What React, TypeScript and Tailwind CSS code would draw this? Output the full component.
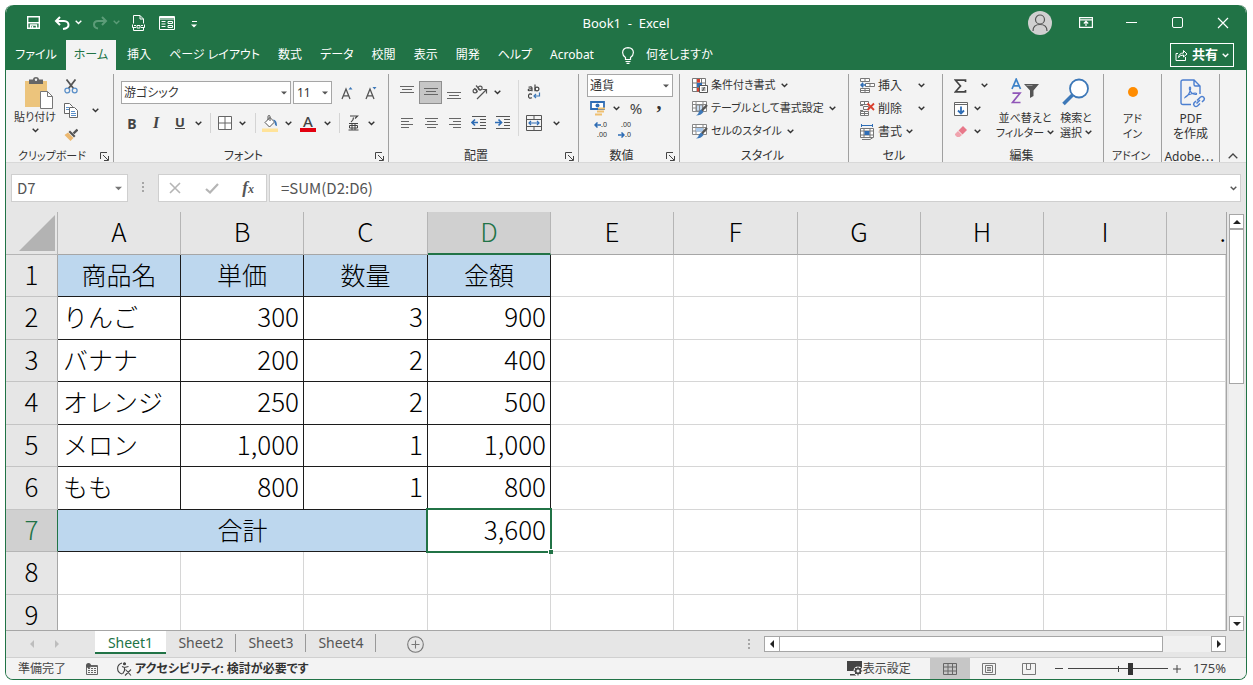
import React, { useState } from 'react';

type Kids = { children?: React.ReactNode };

const Chev = ({ className = 'w-4', label }: { className?: string; label: string }) => (
  <button aria-label={label} className={`flex h-5 shrink-0 items-center justify-center ${className}`}>
    <ChevIcon />
  </button>
);

const ChevIcon = () => (
  <svg width="7" height="5" viewBox="0 0 7 5" fill="none" stroke="currentColor" strokeWidth="1.4" className="shrink-0">
    <path d="M0.7 0.8 3.5 3.6 6.3 0.8" />
  </svg>
);

const Tri = ({ dir = 'down', className = '' }: { dir?: 'down' | 'up' | 'left' | 'right'; className?: string }) => {
  const d = {
    down: 'M0 2h8L4 6z',
    up: 'M0 6h8L4 2z',
    left: 'M6 0v8L2 4z',
    right: 'M2 0v8l4-4z',
  }[dir];
  return (
    <svg width="8" height="8" viewBox="0 0 8 8" fill="currentColor" className={className}>
      <path d={d} />
    </svg>
  );
};

const Tool = ({ label, className = 'w-6', children }: Kids & { label: string; className?: string }) => (
  <button aria-label={label} className={`flex h-6 shrink-0 items-center justify-center ${className}`}>
    {children}
  </button>
);

const Launcher = () => (
  <button aria-label="詳細設定" className="flex h-3 w-3 shrink-0 items-center justify-center">
    <svg width="9" height="9" viewBox="0 0 9 9" fill="none" stroke="#444" strokeWidth="1">
      <path d="M0.5 7V0.5H7M3 3l5 5M8.5 4v4.5H4" />
    </svg>
  </button>
);

const Group = ({
  name,
  className,
  launcher = false,
  nameSize = 'text-[12px]',
  children,
}: Kids & { name: React.ReactNode; className: string; launcher?: boolean; nameSize?: string }) => (
  <section className={`flex shrink-0 flex-col border-r border-[#a0a0a0] ${className}`}>
    <div className="flex h-[76px] px-[5px]">{children}</div>
    <div className="flex h-3 items-center pr-[3px]">
      <h2 className={`flex-1 whitespace-nowrap text-center leading-3 ${nameSize}`}>{name}</h2>
      {launcher && <Launcher />}
    </div>
  </section>
);

const Sep = ({ className = 'w-[11px]' }: { className?: string }) => (
  <span className={`flex h-5 shrink-0 justify-center ${className}`}>
    <span className="w-px bg-[#d4d4d4]" />
  </span>
);

const Lines = ({ rows }: { rows: [number, number, number][] }) => (
  <svg width="16" height="16" viewBox="0 0 16 16" stroke="#666" strokeWidth="1">
    {rows.map(([x1, x2, y]) => (
      <path key={y} d={`M${x1} ${y}.5H${x2}`} />
    ))}
  </svg>
);

const SaveIcon = () => (
  <svg width="13" height="13" viewBox="0 0 13 13" fill="none" stroke="#fff" strokeWidth="1.4">
    <path d="M0.7 0.7h11.6v11.6H0.7z" />
    <path d="M1 6.8h11" />
    <path d="M3.5 12V9h6V12" />
    <path d="M5.500 10v2" />
  </svg>
);

const UndoIcon = ({ flip = false }: { flip?: boolean }) => (
  <svg width="16" height="14" viewBox="0 0 16 14" fill="none" stroke={flip ? '#5c9c78' : '#fff'} strokeWidth="2">
    <path d={flip ? 'M14 5H6C3 5 2 7 2 8.5S3 12 6 12.5M10 1l4 4-4 4' : 'M2 5h8c3 0 4.5 2 4.5 4S13 12.5 9 13M6 1 2 5l4 4'} />
  </svg>
);

const DocIcon = () => (
  <svg width="13" height="16" viewBox="0 0 13 16" fill="none" stroke="#fff" strokeWidth="1">
    <path d="M1.500 8.500V0.500h6.500L11.500 4v4.500M8 0.500V4h3.500" />
    <path d="M0.500 9.500v3M12.500 9.500v3M2 10.500h2M9 10.500h2M0.500 12.500h3.500M9 12.500h3.500M5 10.500h3v2.500H5zM1.500 13v2.500h10V13" />
  </svg>
);

const FormIcon = () => (
  <svg width="16" height="14" viewBox="0 0 16 14" fill="none" stroke="#fff" strokeWidth="1">
    <path d="M0.500 0.500h15v13H0.500zM0.500 3h15M2.500 5.500h4M2.500 8h4M2.500 10.500h4M9 5.500h4.500v2H9zM9 9.500h4.500v2H9z" />
    <path d="M1 1.500h14" />
  </svg>
);

const PasteIcon = () => (
  <svg width="28" height="32" viewBox="0 0 28 32">
    <path d="M0 4h22v26H0z" fill="#ecc47c" />
    <path d="M4 2.500h4C8 .8 9.500 0 11 0s3 .8 3 2.500h4V7H4z" fill="#666" />
    <circle cx="11" cy="2.800" r="1.200" fill="#f2f2f2" />
    <path d="M15.500 14.500h7l5 5v12h-12z" fill="#fff" stroke="#777" />
    <path d="M22.500 14.500v5h5" fill="none" stroke="#777" />
  </svg>
);

const CutIcon = () => (
  <svg width="14" height="15" viewBox="0 0 14 15" fill="none">
    <path d="M2.500 0.500 9.500 9.500M11.500 0.500 4.500 9.500" stroke="#555" strokeWidth="1.800" />
    <circle cx="3.300" cy="11.500" r="2.400" stroke="#5a8fc8" strokeWidth="1.300" />
    <circle cx="10.700" cy="11.500" r="2.400" stroke="#5a8fc8" strokeWidth="1.300" />
  </svg>
);

const CopyIcon = () => (
  <svg width="14" height="15" viewBox="0 0 14 15" fill="#fff" stroke="#666">
    <path d="M0.500 0.500h5l3 3v7h-8z" />
    <path d="M5.500 4.500h5l3 3v7h-8z" />
    <path d="M2 4.500h3M2 6.500h3M7 8.500h4M7 10.500h5M7 12.500h5" stroke="#5a8fc8" />
  </svg>
);

const BrushIcon = () => (
  <svg width="14" height="13" viewBox="0 0 14 13">
    <path d="M13.500 1.500 9.500 5.500" stroke="#555" strokeWidth="2.400" />
    <path d="M6 2.500 11.500 8 10 9.500 4.500 4z" fill="#555" />
    <path d="M4 4.500 9.500 10 6.500 13 0.500 7z" fill="#ecb870" />
  </svg>
);

const BordersIcon = () => (
  <svg width="14" height="14" viewBox="0 0 14 14" fill="#fff" stroke="#666">
    <path d="M0.500 0.500h13v13h-13zM7 0.500v13M0.500 7h13" />
  </svg>
);

const FillIcon = () => (
  <svg width="16" height="17" viewBox="0 0 16 17">
    <path d="M0 13.500h16V17H0z" fill="#ffe39a" />
    <path d="M3 7.500 8 2.500l4.500 4.500L7.500 12z" fill="#fff" stroke="#555" />
    <path d="M6 5V1.500Q6 .5 7 .5t1 1V6" fill="none" stroke="#555" />
    <path d="M11 4.500q4 0 4 6.500-2.500 0-2.300-4z" fill="#3d78b8" />
  </svg>
);

const FontColorIcon = () => (
  <span className="flex w-4 flex-col items-center">
    <span className="text-[15px] font-medium leading-[13px] text-[#444]">A</span>
    <span className="h-1 w-4 bg-[#e3000f]" />
  </span>
);

const FontSizeIcon = ({ up = false }: { up?: boolean }) => (
  <svg width="13" height="14" viewBox="0 0 13 14" fill="none">
    <path d="M1 13 5 3l4 10M2.400 9.800h5.200" stroke="#555" strokeWidth="1.300" />
    <path d={up ? 'M7.500 3.500 9.500 1l2 2.500z' : 'M7.500 1 9.500 3.500l2-2.500z'} fill="#3d78b8" />
  </svg>
);

const OrientIcon = () => (
  <svg width="17" height="16" viewBox="0 0 17 16" fill="none" stroke="#555" strokeWidth="1.200">
    <circle cx="4" cy="7" r="1.900" />
    <path d="M3.500 4.200 6.500 8.200" />
    <path d="M5 1.500 9.500 6.500" />
    <circle cx="9.200" cy="4" r="1.900" />
    <path d="M6 15 15 6M11.500 5.500H15.500V9.500" />
  </svg>
);

const WrapIcon = () => (
  <svg width="14" height="16" viewBox="0 0 14 16" fill="none" stroke="#444" strokeWidth="1.200">
    <path d="M1.500 3.300Q5 2 5 4.200v3M5 4.800Q1.200 4.500 1.200 6t3.800 0M8 0.500v6.700" />
    <circle cx="10" cy="5" r="1.900" />
    <path d="M5 10.400Q1.500 9 1.500 12t3.500 1.800" />
    <path d="M12.500 8.500v3.500H7M9 10 7 12l2 2" stroke="#3d78b8" />
  </svg>
);

const IndentIcon = ({ inc = false }: { inc?: boolean }) => (
  <svg width="16" height="14" viewBox="0 0 16 14" fill="none">
    <path d="M1 0.500h14M9 3.500h6M9 6.500h6M9 9.500h6M1 12.500h14" stroke="#555" />
    <path d={inc ? 'M0 6.500h6M3.500 3.500l3 3-3 3' : 'M7 6.500H1M4 3.500l-3 3 3 3'} stroke="#2f6db5" strokeWidth="1.700" />
  </svg>
);

const MergeIcon = () => (
  <svg width="16" height="16" viewBox="0 0 16 16" fill="none" stroke="#555">
    <path d="M0.500 0.500h15v15H0.500zM0.500 4.500h15M0.500 11.500h15M8 0.500v4M8 11.500v4" />
    <path d="M3 8h10M5 6 3 8l2 2M11 6l2 2-2 2" stroke="#2f6db5" strokeWidth="1.200" />
  </svg>
);

const RubyIcon = () => (
  <svg width="11" height="16" viewBox="0 0 11 16" fill="none" stroke="#444">
    <path d="M2 1h7.500L7 3.500M5.500 2.500Q5.500 5.500 3 7" strokeWidth="1.200" />
    <path d="M1 8.500h9M1.500 10.500h8v2.500h-8zM4 8.500v6.500M7 8.500v6.500M0.500 15h10" />
  </svg>
);

const MoneyIcon = () => (
  <svg width="16" height="15" viewBox="0 0 16 15">
    <path d="M1 1h13v7H1z" fill="#fff" stroke="#2f6db5" strokeWidth="1.800" />
    <circle cx="7.500" cy="4.500" r="2" fill="#2f6db5" />
    <path d="M8 6.500h7v2H8zM7 9.500h7v2H7zM5 12.500h7v2H5z" fill="#efc070" />
  </svg>
);

const DecimalIcon = ({ inc = false }: { inc?: boolean }) => (
  <span className="flex h-[22px] w-4 flex-col text-[7px] leading-[10px] text-[#333]">
    <span className="flex items-center justify-end">
      {inc && <ArrowIcon left />}
      {inc ? '.0' : '.00'}
    </span>
    <span className="flex items-center justify-end">
      {!inc && <ArrowIcon />}
      {inc ? '.00' : '.0'}
    </span>
  </span>
);

const ArrowIcon = ({ left = false }: { left?: boolean }) => (
  <svg width="7" height="6" viewBox="0 0 7 6" fill="none" stroke="#2f6db5" strokeWidth="1.500">
    <path d={left ? 'M7 3H1M3.500 0.500 1 3l2.500 2.500' : 'M0 3h6M3.500 0.500 6 3 3.500 5.500'} />
  </svg>
);

const CondIcon = () => (
  <svg width="16" height="15" viewBox="0 0 16 15" fill="none" stroke="#777">
    <path d="M0.500 0.500h13v13h-13zM0.500 5h13M0.500 9.500h13M5 0.500v13M9.500 0.500v13" fill="#fff" />
    <path d="M5 1h3v3.500H5z" fill="#d9402e" stroke="none" />
    <path d="M5 5h5v4H5z" fill="#2f6db5" stroke="none" />
    <path d="M5 10h2v3.500H5z" fill="#d9402e" stroke="none" />
    <path d="M7.500 7.500h8v7h-8z" fill="#fff" stroke="#555" />
    <path d="M9.500 10h4M9.500 12h4M12.500 9l-2 4" stroke="#444" strokeWidth=".9" />
  </svg>
);

const TableFmtIcon = ({ cell = false }: { cell?: boolean }) => (
  <svg width="16" height="15" viewBox="0 0 16 15" fill="none" stroke="#888">
    <path d="M0.500 0.500h14v10h-14zM0.500 3.500h14M0.500 7h14M4 0.500v10M11 0.500v10" fill="#fff" />
    {cell ? <path d="M4 4h7v3.500H4z" fill="#a9c8ea" stroke="none" /> : <path d="M4.500 4h6v6h-6zM7.500 4v6" fill="#c8dcf2" />}
    <path d="M15 4 9.500 10" stroke="#555" strokeWidth="2.200" />
    <path d="M9 8.500 11.500 11Q9 14.500 4 14.500 7 12.500 7 10.500z" fill="#3d78b8" stroke="none" />
  </svg>
);

const CellInsIcon = () => (
  <svg width="15" height="15" viewBox="0 0 15 15" fill="#fff" stroke="#777">
    <path d="M0.500 0.500h9v3h-9zM5 0.500v3M5.500 5.500h9v3h-9zM10 5.500v3M0.500 10.500h9v4h-9zM5 10.500v4M0.500 12.500h9" />
    <path d="M6 7H1M3.200 4.800 1 7l2.200 2.200" stroke="#2f6db5" strokeWidth="1.500" fill="none" />
  </svg>
);

const CellDelIcon = () => (
  <svg width="15" height="15" viewBox="0 0 15 15" fill="#fff" stroke="#777">
    <path d="M0.500 0.500h8v3h-8zM4.500 0.500v3M3.500 5.500h5v3h-5zM0.500 10.500h8v4h-8zM4.500 10.500v4M0.500 12.500h8" />
    <path d="M0 4.500h3M0 9.500h3" />
    <path d="M7.500 2.500 14 9M14 2.500 7.500 9" stroke="#d9402e" strokeWidth="1.800" fill="none" />
  </svg>
);

const CellFmtIcon = () => (
  <svg width="15" height="16" viewBox="0 0 15 16" fill="none" stroke="#777">
    <path d="M0.500 4.500h13v9h-13zM0.500 7h13M0.500 11h13M4 4.500v9M10 4.500v9" fill="#fff" />
    <path d="M4.500 7h5v4h-5z" fill="#2f6db5" stroke="none" />
    <path d="M1 1.500h12M1.500 0v3M12.500 0v3" stroke="#2f6db5" />
    <path d="M2 15.500h8l3-2" />
  </svg>
);

const FillDownIcon = () => (
  <svg width="14" height="14" viewBox="0 0 14 14" fill="#fff" stroke="#666">
    <path d="M0.500 0.500h13v13h-13zM0.500 2.500h13" />
    <path d="M7 4.500v7M4 8.500l3 3 3-3" stroke="#2f6db5" strokeWidth="1.800" fill="none" />
  </svg>
);

const EraserIcon = () => (
  <svg width="14" height="13" viewBox="0 0 14 13">
    <path d="M9 1 13 5 8.500 9.500 4.500 5.500z" fill="#e8788a" />
    <path d="M4 6 8 10 5.500 12H3L1 10V9z" fill="#f0a3ae" />
  </svg>
);

const SortIcon = () => (
  <svg width="28" height="26" viewBox="0 0 28 26" fill="none">
    <path d="M1 11 5.200 1.200 9.500 11M2.600 7.800h5.400" stroke="#3d82c8" strokeWidth="1.700" />
    <path d="M1.500 15.200h7.500L1.500 24.500H9.500" stroke="#9056b8" strokeWidth="1.700" />
    <path d="M13 6h15l-5.500 6.500V18l-3.500 2v-7.500z" fill="#555" />
    <path d="M15.500 7.500h6" stroke="#999" />
  </svg>
);

const FindIcon = () => (
  <svg width="28" height="28" viewBox="0 0 28 28" fill="none">
    <circle cx="17" cy="10.500" r="9" fill="#fff" stroke="#3d78b8" strokeWidth="1.800" />
    <path d="M10.500 17 1.500 26" stroke="#3d78b8" strokeWidth="3.500" />
  </svg>
);

const PdfIcon = () => (
  <svg width="26" height="29" viewBox="0 0 26 29" fill="none" stroke="#4c7fd0" strokeWidth="1.400">
    <path d="M11 25.500H3Q1 25.500 1 23.500V3Q1 1 3 1h11l6 6v8M14 1v4.500q0 1.500 1.500 1.500H20" />
    <path d="M5 18.500q4-2 5.500-8 .5-2.500-.5-2.500t-.5 2.500Q11 15 15.500 15.500q1.500 0 1-1-1-1-5.500.5Q6 16.500 5 18.500z" strokeWidth="1.100" />
    <path d="M17 21.500l3.500-3.500q1.500-1 3 0 1.500 1.500.5 3l-2 2M20 21l-3.500 3.500M20 24.500l-2.500 2.500q-1.500 1-3 0-1.500-1.500-.5-3l2-2" strokeWidth="1.500" />
  </svg>
);

const Dots = ({ className = '' }: { className?: string }) => (
  <span className={`flex flex-col gap-[2px] ${className}`}>
    {[0, 1, 2].map((i) => (
      <span key={i} className="h-[2px] w-[2px] bg-[#a6a6a6]" />
    ))}
  </span>
);

const MENU = ['挿入', 'ページ レイアウト', '数式', 'データ', '校閲', '表示', '開発', 'ヘルプ', 'Acrobat'];

function TitleBar() {
  return (
    <header className="grid h-[35px] shrink-0 grid-cols-[1fr_auto_1fr] items-center rounded-t-lg bg-[#217346] text-white">
      <div className="flex items-center pl-5">
        <button aria-label="上書き保存" className="flex w-[15px] justify-center"><SaveIcon /></button>
        <button aria-label="元に戻す" className="ml-[13px]"><UndoIcon /></button>
        <Chev label="元に戻すの一覧" className="w-4" />
        <button aria-label="やり直し" className="ml-[6px]"><UndoIcon flip /></button>
        <span className="flex w-4 justify-center text-[#5c9c78]"><ChevIcon /></span>
        <button aria-label="印刷プレビュー" className="ml-2"><DocIcon /></button>
        <button aria-label="フォーム" className="ml-[14px]"><FormIcon /></button>
        <button aria-label="クイック アクセス ツール バーのカスタマイズ" className="ml-4 flex flex-col items-center gap-px pt-1">
          <span className="h-px w-[5px] bg-white" />
          <Tri className="h-[6px] w-[6px]" />
        </button>
      </div>
      <h1 className="whitespace-pre pt-[3px] text-[13px]">Book1  -  Excel</h1>
      <div className="flex items-center justify-end pr-[17px]">
        <button aria-label="アカウント" className="flex h-6 w-6 items-center justify-center rounded-full bg-[#d0d0d0]">
          <svg width="16" height="18" viewBox="0 0 16 18" fill="none" stroke="#555" strokeWidth="1.200">
            <circle cx="8" cy="5.500" r="4.500" />
            <path d="M1 17q0-6.500 7-6.500t7 6.500" />
          </svg>
        </button>
        <button aria-label="リボンの表示オプション" className="ml-[27px]">
          <svg width="14" height="11" viewBox="0 0 14 11" fill="none" stroke="#fff" strokeWidth="1.200">
            <path d="M0.600 0.600h12.800v9.800H0.600zM0.600 2.800h12.800M7 9V4.500M4.800 6.500 7 4.400l2.200 2.100" />
          </svg>
        </button>
        <button aria-label="最小化" className="ml-[33px] flex h-4 w-[11px] items-center">
          <span className="h-px w-full bg-white" />
        </button>
        <button aria-label="最大化" className="ml-[35px] h-[11px] w-[11px] rounded-[2px] border border-white" />
        <button aria-label="閉じる" className="ml-[34px]">
          <svg width="12" height="12" viewBox="0 0 12 12" stroke="#fff" strokeWidth="1.200">
            <path d="M1 1l10 10M11 1 1 11" />
          </svg>
        </button>
      </div>
    </header>
  );
}

function MenuBar() {
  return (
    <nav className="flex h-[30px] shrink-0 items-stretch bg-[#217346] text-[12px] text-white">
      <button className="w-[60px] whitespace-nowrap">ファイル</button>
      <button className="w-[50px] whitespace-nowrap bg-[#f3f3f3] text-[#217346]">ホーム</button>
      <div className="ml-[11px] flex gap-[18px]">
        {MENU.map((m) => (
          <button key={m} className="whitespace-nowrap">{m}</button>
        ))}
      </div>
      <button className="ml-[28px] flex items-center gap-3 whitespace-nowrap">
        <svg width="12" height="17" viewBox="0 0 12 17" fill="none" stroke="#fff" strokeWidth="1.200">
          <path d="M3.500 12.500V10.500Q0.600 8.500 0.600 5.500.8.800 6 .6q5.200.2 5.400 4.900 0 3-2.900 5v2zM3.500 14.500h5M4.500 16.300h3" />
        </svg>
        何をしますか
      </button>
      <button className="ml-auto mr-3 mt-[3px] flex h-6 w-16 items-center justify-center gap-1 self-start border border-white text-[13px] font-bold">
        <svg width="13" height="12" viewBox="0 0 13 12" fill="none" stroke="#fff">
          <path d="M3 4.500H1v7h9.500V8M3.500 8.500q.5-4.500 5-4.500V1.500L12 5 8.500 8V6q-3.500 0-5 2.500z" />
        </svg>
        共有
        <ChevIcon />
      </button>
    </nav>
  );
}

function Ribbon() {
  return (
    <div className="flex h-[93px] shrink-0 overflow-hidden border-b border-[#d8d8d8] bg-[#f3f3f3] pt-[4px] text-[#333]">
      <Group name="クリップボード" nameSize="text-[11px]" launcher className="w-[108px]">
        <button className="flex w-12 flex-col items-center pt-[3px] text-[11px] leading-[15px]">
          <span className="pl-2"><PasteIcon /></span>
          <span className="whitespace-nowrap">貼り付け</span>
          <span className="pt-1"><ChevIcon /></span>
        </button>
        <div className="flex flex-col items-start">
          <Tool label="切り取り" className="w-6"><CutIcon /></Tool>
          <span className="flex items-center">
            <Tool label="コピー" className="w-6"><CopyIcon /></Tool>
            <Chev label="コピーの一覧" className="w-6" />
          </span>
          <Tool label="書式のコピー/貼り付け" className="w-6"><BrushIcon /></Tool>
        </div>
      </Group>

      <Group name="フォント" launcher className="w-[275px]">
        <div className="flex flex-col gap-[7px] pl-[2px] pt-[7px]">
          <div className="flex h-[23px]">
            <button aria-label="フォント名" className="flex w-[170px] items-center justify-between border border-[#a6a6a6] bg-white px-[2px] text-[12px]">
              游ゴシック
              <Tri className="mr-px h-[6px] w-[6px] text-[#555]" />
            </button>
            <button aria-label="フォント サイズ" className="ml-[2px] flex w-[39px] items-center justify-between border border-[#a6a6a6] bg-white px-[3px] text-[12px]">
              11
              <Tri className="h-[6px] w-[6px] text-[#555]" />
            </button>
            <Tool label="フォント サイズの拡大" className="ml-[3px] w-6"><FontSizeIcon up /></Tool>
            <Tool label="フォント サイズの縮小" className="w-6"><FontSizeIcon /></Tool>
          </div>
          <div className="flex items-center">
            <Tool label="太字" className="w-[22px]"><b className="text-[14px] text-[#444]">B</b></Tool>
            <Tool label="斜体" className="w-[26px]"><i className="font-['Liberation_Serif',serif] text-[16px] font-bold text-[#444]">I</i></Tool>
            <Tool label="下線" className="w-[22px]"><u className="text-[13px] font-bold text-[#444]">U</u></Tool>
            <Chev label="下線の一覧" className="w-[14px]" />
            <Sep />
            <Tool label="罫線" className="w-[18px]"><BordersIcon /></Tool>
            <Chev label="罫線の一覧" />
            <Sep className="w-[10px]" />
            <Tool label="塗りつぶしの色" className="w-[20px]"><FillIcon /></Tool>
            <Chev label="塗りつぶしの色の一覧" />
            <Tool label="フォントの色"><FontColorIcon /></Tool>
            <Chev label="フォントの色の一覧" className="w-[14px]" />
            <Sep className="w-[10px]" />
            <Tool label="ふりがな" className="w-[18px]"><RubyIcon /></Tool>
            <Chev label="ふりがなの一覧" className="w-[18px]" />
          </div>
        </div>
      </Group>

      <Group name="配置" launcher className="w-[190px]">
        <div className="flex gap-[3px] pt-[6px]">
          <div className="flex flex-col gap-[7px]">
            <div className="flex items-center">
              <Tool label="上揃え" className="w-[25px]"><Lines rows={[[1, 15, 2], [3, 13, 5], [1, 15, 8]]} /></Tool>
              <button aria-label="上下中央揃え" aria-pressed="true" className="flex h-[23px] w-[23px] items-center justify-center border border-[#8f8f8f] bg-[#c6c6c6]">
                <Lines rows={[[1, 15, 4], [3, 13, 7], [1, 15, 10]]} />
              </button>
              <Tool label="下揃え"><Lines rows={[[1, 15, 8], [3, 13, 11], [1, 15, 14]]} /></Tool>
              <Tool label="方向" className="w-[26px]"><OrientIcon /></Tool>
              <Chev label="方向の一覧" className="w-[10px]" />
            </div>
            <div className="flex items-center">
              <Tool label="左揃え" className="w-[25px]"><Lines rows={[[2, 14, 3], [2, 10, 6], [2, 14, 9], [2, 10, 12]]} /></Tool>
              <Tool label="中央揃え"><Lines rows={[[2, 15, 3], [4, 13, 6], [2, 15, 9], [4, 13, 12]]} /></Tool>
              <Tool label="右揃え"><Lines rows={[[2, 14, 3], [6, 14, 6], [2, 14, 9], [6, 14, 12]]} /></Tool>
              <Tool label="インデントを減らす"><IndentIcon /></Tool>
              <Tool label="インデントを増やす"><IndentIcon inc /></Tool>
            </div>
          </div>
          <span className="h-14 w-px bg-[#d8d8d8]" />
          <div className="flex flex-col gap-[7px]">
            <Tool label="折り返して全体を表示する"><WrapIcon /></Tool>
            <div className="flex items-center">
              <Tool label="セルを結合して中央揃え"><MergeIcon /></Tool>
              <Chev label="結合の一覧" className="w-5" />
            </div>
          </div>
        </div>
      </Group>

      <Group name="数値" launcher className="w-[101px]">
        <div className="flex flex-col pl-[3px]">
          <button aria-label="数値の書式" className="flex h-[23px] w-[86px] items-center justify-between border border-[#a6a6a6] bg-white px-[2px] text-[12px]">
            通貨
            <Tri className="mr-px h-[6px] w-[6px] text-[#555]" />
          </button>
          <div className="flex h-[22px] items-center">
            <Tool label="通貨表示形式" className="w-[22px]"><MoneyIcon /></Tool>
            <Chev label="通貨の一覧" className="w-[14px]" />
            <Tool label="パーセント" className="w-[26px]"><span className="text-[15px] text-[#444]">%</span></Tool>
            <Tool label="桁区切り" className="w-5"><span className="pb-3 font-['Liberation_Serif',serif] text-[20px] font-bold leading-4">,</span></Tool>
          </div>
          <div className="flex items-center">
            <Tool label="小数点以下の表示桁数を増やす"><DecimalIcon inc /></Tool>
            <Tool label="小数点以下の表示桁数を減らす"><DecimalIcon /></Tool>
          </div>
        </div>
      </Group>

      <Group name="スタイル" className="w-[169px]">
        <div className="flex flex-col pl-[7px] text-[11px]">
          {[
            { t: '条件付き書式', i: <CondIcon /> },
            { t: 'テーブルとして書式設定', i: <TableFmtIcon /> },
            { t: 'セルのスタイル', i: <TableFmtIcon cell /> },
          ].map((r) => (
            <button key={r.t} className="flex h-[23px] items-center gap-[3px] whitespace-nowrap">
              {r.i}
              <span className="pr-[2px]">{r.t}</span>
              <ChevIcon />
            </button>
          ))}
        </div>
      </Group>

      <Group name="セル" className="w-[94px]">
        <div className="flex flex-col pl-[6px] text-[12px]">
          {[
            { t: '挿入', i: <CellInsIcon />, gap: 'gap-4' },
            { t: '削除', i: <CellDelIcon />, gap: 'gap-4' },
            { t: '書式', i: <CellFmtIcon />, gap: 'gap-1' },
          ].map((r) => (
            <button key={r.t} className={`flex h-[23px] items-center whitespace-nowrap ${r.gap}`}>
              <span className="flex items-center gap-[3px]">
                {r.i}
                {r.t}
              </span>
              <ChevIcon />
            </button>
          ))}
        </div>
      </Group>

      <Group name="編集" className="w-[161px]">
        <div className="flex flex-col pl-[6px]">
          <button aria-label="オート SUM" className="flex h-[23px] items-center gap-[14px]">
            <svg width="13" height="14" viewBox="0 0 13 14" fill="none" stroke="#444" strokeWidth="1.700">
              <path d="M11.500 3V1.200H1.500L6.500 7l-5 5.800h10V11" />
            </svg>
            <ChevIcon />
          </button>
          <button aria-label="フィル" className="flex h-[23px] items-center gap-[6px]"><FillDownIcon /><ChevIcon /></button>
          <button aria-label="クリア" className="flex h-[23px] items-center gap-[6px]"><EraserIcon /><ChevIcon /></button>
        </div>
        <button className="ml-[9px] flex w-14 flex-col items-center pt-1 text-[11px] leading-[15px]">
          <span className="h-8"><SortIcon /></span>
          <span className="whitespace-nowrap">並べ替えと</span>
          <span className="flex items-center gap-[3px] whitespace-nowrap">フィルター <ChevIcon /></span>
        </button>
        <button className="ml-[3px] flex w-10 flex-col items-center pt-1 text-[11px] leading-[15px]">
          <span className="h-8"><FindIcon /></span>
          <span className="whitespace-nowrap">検索と</span>
          <span className="flex items-center gap-[3px] whitespace-nowrap">選択 <ChevIcon /></span>
        </button>
      </Group>

      <Group name="アドイン" nameSize="text-[11px]" className="w-[58px]">
        <button className="flex flex-1 flex-col items-center pt-[5px] text-[11px] leading-[15px]">
          <span className="flex h-8 pt-2"><span className="h-[10px] w-[10px] rounded-full bg-[#ff8c00]" /></span>
          <span>アド</span>
          <span>イン</span>
        </button>
      </Group>

      <Group
        name={<>Adobe<span className="font-['Noto_Sans_CJK_JP',sans-serif]">⋯</span></>}
        className="w-[58px]"
      >
        <button className="flex flex-1 flex-col items-center pt-[5px] text-[12px] leading-[15px]">
          <span className="h-8 pl-1"><PdfIcon /></span>
          <span>PDF</span>
          <span className="whitespace-nowrap">を作成</span>
        </button>
      </Group>

      <button aria-label="リボンを折りたたむ" className="ml-2 self-end pb-[3px]">
        <svg width="10" height="6" viewBox="0 0 10 6" fill="none" stroke="#444" strokeWidth="1.300">
          <path d="M0.700 5.300 5 1l4.300 4.300" />
        </svg>
      </button>
    </div>
  );
}

function FormulaBar() {
  const [formula, setFormula] = useState('=SUM(D2:D6)');
  return (
    <div className="flex h-[49px] shrink-0 items-start bg-[#e6e6e6] pl-[5px] pr-[5px] pt-[11px] font-['Noto_Sans_CJK_JP',sans-serif] text-[15px] text-[#555]">
      <button aria-label="名前ボックス" className="flex h-7 w-[117px] items-center justify-between border border-[#cfcfcf] bg-white px-[5px]">
        D7
        <Tri className="h-[7px] w-[7px] text-[#777]" />
      </button>
      <Dots className="mx-[14px] mt-[8px]" />
      <div className="flex h-7 w-[109px] items-center justify-between border border-[#cfcfcf] bg-white pl-[10px] pr-3">
        <button aria-label="キャンセル">
          <svg width="12" height="12" viewBox="0 0 12 12" stroke="#b5b5b5" strokeWidth="1.600"><path d="M1 1l10 10M11 1 1 11" /></svg>
        </button>
        <button aria-label="入力">
          <svg width="14" height="11" viewBox="0 0 14 11" fill="none" stroke="#b5b5b5" strokeWidth="2.200"><path d="M1 6l4 3.500L13 1" /></svg>
        </button>
        <button aria-label="関数の挿入" className="font-['Liberation_Serif',serif] text-[17px] font-bold italic leading-4">
          f<span className="text-[12px]">x</span>
        </button>
      </div>
      <label className="ml-[2px] flex h-7 flex-1 items-center border border-[#cfcfcf] bg-white pl-[11px] pr-[3px]">
        <input
          aria-label="数式バー"
          value={formula}
          onChange={(e) => setFormula(e.target.value)}
          className="min-w-0 flex-1 bg-transparent outline-none"
        />
        <ChevIcon />
      </label>
    </div>
  );
}

const COLS = ['A', 'B', 'C', 'D', 'E', 'F', 'G', 'H', 'I'];
const ROWS: string[][] = [
  ['商品名', '単価', '数量', '金額'],
  ['りんご', '300', '3', '900'],
  ['バナナ', '200', '2', '400'],
  ['オレンジ', '250', '2', '500'],
  ['メロン', '1,000', '1', '1,000'],
  ['もも', '800', '1', '800'],
  ['合計', '3,600'],
  [],
  [],
];

const GRID = 'border-b border-r border-[#d6d6d6]';
const INK = 'border-b border-r border-[#1c1c1c] pt-0 pb-1';

function DataRow({ cells, n }: { cells: string[]; n: number }) {
  const used = n <= 7 ? 4 : 0;
  const blanks = Array.from({ length: 10 - used }, (_, i) => (
    <td key={i} className={GRID} />
  ));
  return (
    <tr className="odd:h-[42px] even:h-[43px]">
      <th
        scope="row"
        className={
          n === 7
            ? 'border-b border-r border-b-[#b5b5b5] border-r-[#217346] bg-[#d0d0d0] px-0 pt-0 pb-1 font-light text-[#217346]'
            : 'border-b border-r border-b-[#c4c4c4] border-r-[#a6a6a6] bg-[#e6e6e6] px-0 pt-0 pb-1 font-light'
        }
      >
        {n}
      </th>
      {n === 1 && cells.map((c) => <td key={c} className={`bg-[#bdd7ee] text-center text-[25px] ${INK}`}>{c}</td>)}
      {n > 1 && n < 7 && cells.map((c, i) => (
        <td key={i} className={`${INK} ${i === 0 ? 'pl-[5px] text-left text-[25px]' : 'pr-1 text-right'}`}>{c}</td>
      ))}
      {n === 7 && (
        <>
          <td colSpan={3} className={`bg-[#bdd7ee] text-center text-[25px] ${INK}`}>{cells[0]}</td>
          <td className={`relative pr-1 text-right ${INK}`}>
            {cells[1]}
            <span className="pointer-events-none absolute -inset-[2px] border-2 border-[#217346]" />
            <span className="pointer-events-none absolute -bottom-[3px] -right-[3px] h-[5px] w-[5px] border-l border-t border-white bg-[#217346]" />
          </td>
        </>
      )}
      {blanks}
    </tr>
  );
}

function Sheet() {
  return (
    <div className="flex min-h-0 flex-1 bg-[#e6e6e6]">
      <div className="min-w-0 flex-1 overflow-hidden border-b border-r border-[#a6a6a6] bg-white">
        <table className="w-full table-fixed border-separate border-spacing-0 font-['Noto_Sans_CJK_JP',sans-serif] text-[26px] font-light leading-[36px] text-black [font-feature-settings:normal]">
          <colgroup>
            <col className="w-[52px]" />
            <col className="w-[123px]" />
            <col className="w-[123px]" />
            <col className="w-[124px]" />
            <col className="w-[123px]" />
            <col className="w-[123px]" />
            <col className="w-[124px]" />
            <col className="w-[123px]" />
            <col className="w-[123px]" />
            <col className="w-[123px]" />
            <col />
          </colgroup>
          <thead>
            <tr className="h-[43px] bg-[#e6e6e6]">
              <td className="border-b border-r border-[#b5b5b5] p-0">
                <button aria-label="すべて選択" className="flex w-full justify-end pr-[2px]">
                  <svg width="36" height="36" viewBox="0 0 36 36" fill="#b3b3b3"><path d="M36 0v36H0z" /></svg>
                </button>
              </td>
              {COLS.map((c) => (
                <th
                  key={c}
                  scope="col"
                  className={
                    c === 'D'
                      ? 'border-b-2 border-r border-b-[#217346] border-r-[#b5b5b5] bg-[#d0d0d0] px-0 pt-0 pb-1 font-light text-[#217346]'
                      : 'border-b border-r border-b-[#a6a6a6] border-r-[#b5b5b5] px-0 pt-0 pb-1 font-light'
                  }
                >
                  {c}
                </th>
              ))}
              <th scope="col" className="border-b border-[#a6a6a6] px-0 pt-0 pb-1 text-right font-light">.</th>
            </tr>
          </thead>
          <tbody>
            {ROWS.map((r, i) => (
              <DataRow key={i} cells={r} n={i + 1} />
            ))}
          </tbody>
        </table>
      </div>
      <div className="ml-[2px] mr-[2px] flex w-[15px] flex-col pt-[2px] text-[#222]">
        <button aria-label="上へスクロール" className="flex h-[15px] items-center justify-center border border-[#a6a6a6] bg-white"><Tri dir="up" /></button>
        <div className="flex flex-1 flex-col bg-[#f0f0f0]">
          <div className="h-[155px] border border-[#a6a6a6] bg-white" />
        </div>
        <button aria-label="下へスクロール" className="flex h-[15px] items-center justify-center border border-[#a6a6a6] bg-white"><Tri /></button>
      </div>
    </div>
  );
}

function SheetTabs() {
  const [active, setActive] = useState('Sheet1');
  return (
    <div className="flex h-[26px] shrink-0 items-start bg-[#e6e6e6] text-[14px] text-[#555]">
      <div className="flex h-[26px] w-[89px] items-center gap-[17px] pl-[22px] text-[#bdbdbd]">
        <button aria-label="前のシート"><Tri dir="left" /></button>
        <button aria-label="次のシート"><Tri dir="right" /></button>
      </div>
      {['Sheet1', 'Sheet2', 'Sheet3', 'Sheet4'].map((s) => (
        <button
          key={s}
          onClick={() => setActive(s)}
          className={
            s === active
              ? 'flex h-[23px] w-[71px] items-center justify-center border-b-2 border-[#217346] bg-white pt-[2px] text-[#217346]'
              : 'flex h-[23px] w-[70px] items-center justify-center bg-[linear-gradient(#999,#999)] bg-[length:1px_18px] bg-right bg-no-repeat'
          }
        >
          {s}
        </button>
      ))}
      <button aria-label="新しいシート" className="ml-[31px] mt-[5px]">
        <svg width="17" height="17" viewBox="0 0 17 17" fill="none" stroke="#777" strokeWidth="1.100">
          <circle cx="8.500" cy="8.500" r="7.800" />
          <path d="M8.500 4.500v8M4.500 8.500h8" />
        </svg>
      </button>
      <div className="ml-auto mr-5 mt-[5px] flex w-[478px] items-center text-[#222]">
        <Dots className="mr-[14px]" />
        <button aria-label="左へスクロール" className="flex h-4 w-4 items-center justify-center border border-[#a6a6a6] bg-white"><Tri dir="left" /></button>
        <div className="flex h-4 flex-1 bg-[#f0f0f0]">
          <div className="w-[383px] border border-l-0 border-[#a6a6a6] bg-white" />
        </div>
        <button aria-label="右へスクロール" className="flex h-4 w-[15px] items-center justify-center border border-[#a6a6a6] bg-white"><Tri dir="right" /></button>
      </div>
    </div>
  );
}

function StatusBar() {
  const [zoom, setZoom] = useState(63);
  return (
    <footer className="flex h-[22px] shrink-0 items-center border-t border-[#d0d0d0] bg-[#f3f3f3] text-[12px] text-[#444]">
      <span className="ml-3 whitespace-nowrap">準備完了</span>
      <button aria-label="マクロの記録" className="ml-5">
        <svg width="12" height="12" viewBox="0 0 12 12" fill="none" stroke="#666">
          <path d="M0.500 2.500h11v9h-11zM2 5.500h2M5 5.500h2M8 5.500h2M2 7.500h2M5 7.500h2M8 7.500h2M2 9.500h2M5 9.500h2M8 9.500h2M5 3.500h6" />
          <circle cx="2.500" cy="2.500" r="2.500" fill="#555" stroke="none" />
        </svg>
      </button>
      <button className="ml-[19px] flex items-center gap-[3px] whitespace-nowrap font-bold text-[#333]">
        <svg width="15" height="14" viewBox="0 0 15 14" fill="none" stroke="#444" strokeWidth="1.100">
          <path d="M5 1Q0.600 2.500 0.600 6.500T5 12" />
          <circle cx="7.500" cy="1.800" r="1" fill="#444" />
          <path d="M5 4.500l2.500 1 4-1M7.500 5.500v3L5.500 12M8.500 7.500l5.500 6M14 7.500l-6 6" />
        </svg>
        アクセシビリティ: 検討が必要です
      </button>
      <button className="ml-auto mr-[19px] flex items-center whitespace-nowrap">
        <svg width="16" height="15" viewBox="0 0 16 15">
          <path d="M0 0h15v10H0zM3 13h6v1.500H3z" fill="#444" />
          <circle cx="11" cy="10" r="4.500" fill="#f3f3f3" />
          <circle cx="11" cy="10" r="2.500" fill="none" stroke="#444" strokeWidth="1.500" />
          <path d="M11 5.500v9M6.800 10h8.400M8 7l6 6M14 7l-6 6" stroke="#444" />
          <circle cx="11" cy="10" r="1.300" fill="#f3f3f3" />
        </svg>
        表示設定
      </button>
      <button aria-label="標準" className="flex h-full w-10 items-center justify-center bg-[#c6c6c6]">
        <svg width="14" height="12" viewBox="0 0 14 12" fill="none" stroke="#666"><path d="M0.500 0.500h13v11h-13zM0.500 4h13M0.500 8h13M5 0.500v11M9.500 0.500v11" /></svg>
      </button>
      <button aria-label="ページ レイアウト" className="flex h-full w-[39px] items-center justify-center">
        <svg width="14" height="12" viewBox="0 0 14 12" fill="none" stroke="#777"><path d="M0.500 0.500h13v11h-13zM3.500 2.500h7v7h-7zM5 4.500h4M5 6h4M5 7.500h4" /></svg>
      </button>
      <button aria-label="改ページ プレビュー" className="flex h-full w-10 items-center justify-center">
        <svg width="14" height="12" viewBox="0 0 14 12" fill="none" stroke="#777"><path d="M0.500 0.500h13v11h-13zM4.500 0.500v6h4v-6M8.500 6.500" /></svg>
      </button>
      <button aria-label="縮小" className="ml-[6px] h-px w-2 bg-[#444]" />
      <div className="relative mx-[5px] flex w-[100px] items-center">
        <input
          type="range"
          aria-label="ズーム"
          value={zoom}
          onChange={(e) => setZoom(Number(e.target.value))}
          className="h-px w-full appearance-none bg-[#444] [&::-webkit-slider-thumb]:h-3 [&::-webkit-slider-thumb]:w-[5px] [&::-webkit-slider-thumb]:appearance-none [&::-webkit-slider-thumb]:bg-[#333]"
        />
        <span className="pointer-events-none absolute left-1/2 h-[6px] w-px bg-[#444]" />
      </div>
      <button aria-label="拡大">
        <svg width="8" height="8" viewBox="0 0 8 8" stroke="#444"><path d="M0 4h8M4 0v8" /></svg>
      </button>
      <output className="ml-3 mr-5 text-[13px]">175%</output>
    </footer>
  );
}

export default function App() {
  return (
    <div className="h-screen bg-white pb-[5px] pl-[5px] pr-[6px] pt-[5px] font-['Noto_Sans','Noto_Sans_CJK_JP',sans-serif] [font-feature-settings:'palt']">
      <main className="flex h-full flex-col overflow-hidden rounded-lg border-x border-b border-[#217346] bg-[#e6e6e6]">
        <TitleBar />
        <MenuBar />
        <Ribbon />
        <FormulaBar />
        <Sheet />
        <SheetTabs />
        <StatusBar />
      </main>
    </div>
  );
}
